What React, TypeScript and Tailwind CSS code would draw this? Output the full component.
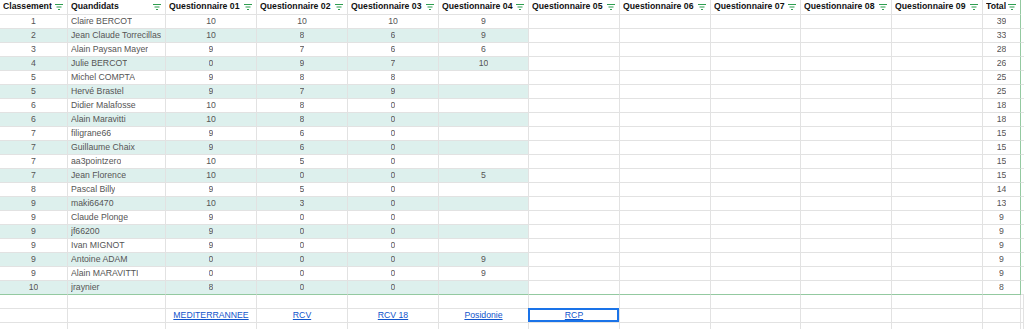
import React from "react";

const COLS = "grid-cols-[68px_98px_91px_91px_91px_90px_91px_91px_90px_91px_91px_38px_3px]";

const headers = [
  "Classement",
  "Quandidats",
  "Questionnaire 01",
  "Questionnaire 02",
  "Questionnaire 03",
  "Questionnaire 04",
  "Questionnaire 05",
  "Questionnaire 06",
  "Questionnaire 07",
  "Questionnaire 08",
  "Questionnaire 09",
  "Total",
];

type Row = [string, string, string, string, string, string, string];

const rows: Row[] = [
  ["1", "Claire BERCOT", "10", "10", "10", "9", "39"],
  ["2", "Jean Claude Torrecillas", "10", "8", "6", "9", "33"],
  ["3", "Alain Paysan Mayer", "9", "7", "6", "6", "28"],
  ["4", "Julie BERCOT", "0", "9", "7", "10", "26"],
  ["5", "Michel COMPTA", "9", "8", "8", "", "25"],
  ["5", "Hervé Brastel", "9", "7", "9", "", "25"],
  ["6", "Didier Malafosse", "10", "8", "0", "", "18"],
  ["6", "Alain Maravitti", "10", "8", "0", "", "18"],
  ["7", "filigrane66", "9", "6", "0", "", "15"],
  ["7", "Guillaume Chaix", "9", "6", "0", "", "15"],
  ["7", "aa3pointzero", "10", "5", "0", "", "15"],
  ["7", "Jean Florence", "10", "0", "0", "5", "15"],
  ["8", "Pascal Billy", "9", "5", "0", "", "14"],
  ["9", "maki66470", "10", "3", "0", "", "13"],
  ["9", "Claude Plonge", "9", "0", "0", "", "9"],
  ["9", "jf66200", "9", "0", "0", "", "9"],
  ["9", "Ivan MIGNOT", "9", "0", "0", "", "9"],
  ["9", "Antoine ADAM", "0", "0", "0", "9", "9"],
  ["9", "Alain MARAVITTI", "0", "0", "0", "9", "9"],
  ["10", "jraynier", "8", "0", "0", "", "8"],
];

const links = ["MEDITERRANNEE", "RCV", "RCV 18", "Posidonie", "RCP"];

function FilterIcon() {
  return (
    <svg width="8" height="6" viewBox="0 0 8 6" className="shrink-0">
      <rect x="0" y="0" width="8" height="1" fill="#2e9e50" />
      <rect x="1.5" y="2.5" width="5" height="1" fill="#2e9e50" />
      <rect x="3" y="5" width="2" height="1" fill="#2e9e50" />
    </svg>
  );
}

export default function App() {
  return (
    <div className="w-[1024px] h-[329px] overflow-hidden bg-white font-['Liberation_Sans',Arial,sans-serif] text-[8.7px]">
      {/* table with banding */}
      <div className={`grid ${COLS} w-[1024px]`}>
        {headers.map((h, i) => (
          <div
            key={h}
            className={`h-[15px] flex items-center justify-between pl-[3px] pr-[4px] border-r border-b border-[#e2e2e2] font-bold text-[#111] ${
              i === 11 ? "border-r-[#93c9a0]" : ""
            }`}
          >
            <span className="truncate">{h}</span>
            <FilterIcon />
          </div>
        ))}
        <div className="h-[15px]" />

        {rows.map((r, ri) => {
          const band = ri % 2 === 1;
          const last = ri === rows.length - 1;
          const cells = [r[0], r[1], r[2], r[3], r[4], r[5], "", "", "", "", "", r[6]];
          return (
            <React.Fragment key={ri}>
              {cells.map((c, ci) => (
                <div
                  key={ci}
                  className={`h-[14px] flex items-center border-r border-b text-[#555] ${
                    last ? "border-b-[#93c9a0]" : "border-b-[#e2e2e2]"
                  } ${ci === 11 ? "border-r-[#93c9a0]" : "border-r-[#e2e2e2]"} ${
                    band && ci < 6 ? "bg-[#ddf0ed]" : "bg-white"
                  } ${ci === 1 ? "justify-start pl-[3px]" : "justify-center"} ${
                    ci === 1 && ri === 13 ? "border-b-[#5e5873]" : ""
                  }`}
                >
                  <span className="truncate">{c}</span>
                </div>
              ))}
              <div className="h-[14px] border-b border-[#e2e2e2]" />
            </React.Fragment>
          );
        })}

        {/* empty row */}
        {Array.from({ length: 13 }).map((_, i) => (
          <div key={"e" + i} className="h-[14px] border-r border-b border-[#e2e2e2]" />
        ))}

        {/* links row */}
        {Array.from({ length: 13 }).map((_, i) => {
          const link = i >= 2 && i <= 6 ? links[i - 2] : "";
          return (
            <div
              key={"l" + i}
              className="relative h-[14px] flex items-center justify-center border-r border-b border-[#e2e2e2]"
            >
              {link && <span className="text-[#1155cc] underline">{link}</span>}
              {i === 6 && (
                <div className="absolute -left-[1px] -top-[1px] -right-[0px] -bottom-[0px] border-2 border-[#1a73e8]" />
              )}
            </div>
          );
        })}

        {/* partial row */}
        {Array.from({ length: 13 }).map((_, i) => (
          <div key={"p" + i} className="h-[14px] border-r border-b border-[#e2e2e2]" />
        ))}
      </div>
    </div>
  );
}
